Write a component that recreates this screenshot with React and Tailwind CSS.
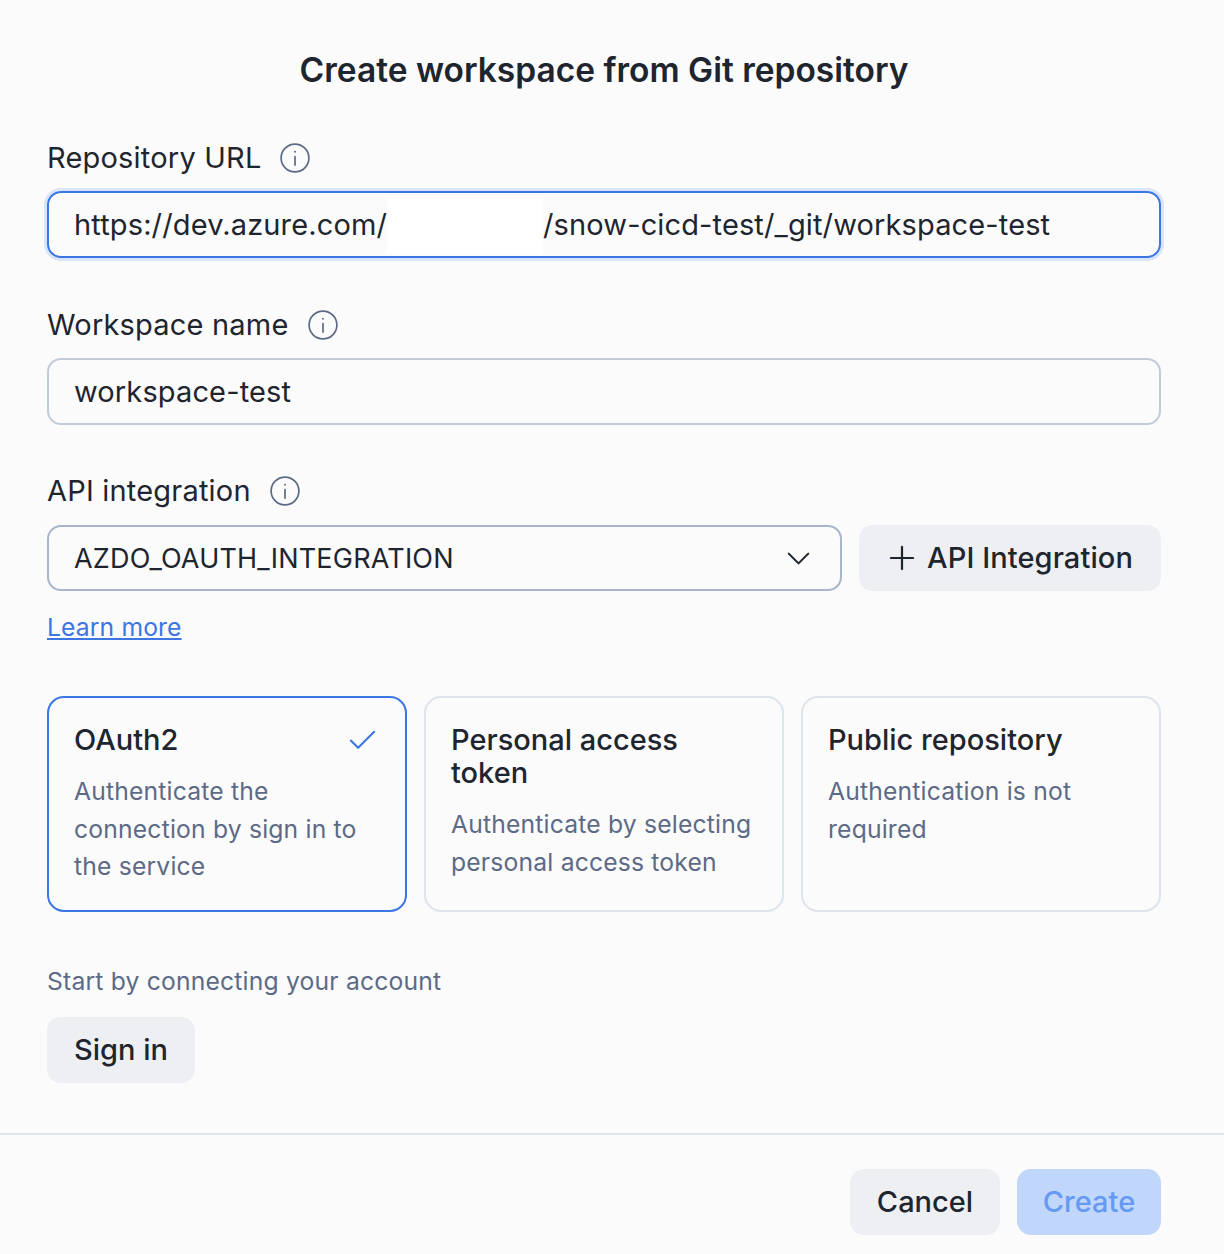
import { Check, ChevronDown, Plus } from "lucide-react";

const font = "font-['Inter',sans-serif]";

function InfoIcon() {
  return (
    <svg width="34" height="34" viewBox="0 0 24 24" fill="none" stroke="#5d6a85" strokeWidth="1.2" strokeLinecap="round">
      <circle cx="12" cy="12" r="9.8" />
      <path d="M12 11v6" />
      <circle cx="12" cy="7.6" r="0.7" fill="#5d6a85" stroke="none" />
    </svg>
  );
}

function Label({ children }) {
  return (
    <div className="flex h-[34px] items-center gap-[17px] text-[29px] leading-[34px] tracking-[0.2px] text-[#1e252f]">
      <span>{children}</span>
      <InfoIcon />
    </div>
  );
}

function AuthCard({ title, description, selected }) {
  return (
    <div className={`rounded-[17px] border-2 px-[25px] pt-[25px] ${selected ? "border-[#3b76e3]" : "border-[#dfe3ec]"}`}>
      <div className="relative">
        <h3 className="text-[29px] leading-[33px] font-medium text-[#1e252f]">{title}</h3>
        {selected ? <Check size={35} strokeWidth={1.45} className="absolute right-0 top-0 text-[#3b76e3]" /> : null}
      </div>
      <p className="mt-[17px] text-[24.7px] leading-[37.5px] tracking-[0.18px] text-[#5d6a85]">{description}</p>
    </div>
  );
}

export default function App() {
  return (
    <div className={`${font} h-[1254px] w-[1224px] overflow-hidden bg-[#fbfbfc]`}>
      <div className="pl-[47px] pr-[63px]">
        <h1 className="pt-[50px] text-center text-[33.5px] leading-[40px] font-semibold text-[#1e252f]">
          Create workspace from Git repository
        </h1>

        <div className="mt-[51px]">
          <Label>Repository URL</Label>
          <div className="mt-[16px] flex h-[67px] items-center rounded-[14px] border-2 border-[#3b76e3] pl-[25px] text-[29px] tracking-[0.13px] text-[#1e252f] shadow-[0_0_0_3px_#d8e5fb]">
            <span>https://dev.azure.com/</span>
            <span className="h-[58px] w-[156px] bg-white" />
            <span>/snow-cicd-test/_git/workspace-test</span>
          </div>
        </div>

        <div className="mt-[50px]">
          <Label>Workspace name</Label>
          <div className="mt-[16px] flex h-[67px] items-center rounded-[14px] border-2 border-[#c3cbdb] pl-[25px] text-[29px] tracking-[0.13px] text-[#1e252f]">
            workspace-test
          </div>
        </div>

        <div className="mt-[49px]">
          <Label>API integration</Label>
          <div className="mt-[17px] flex gap-[17px]">
            <div className="flex h-[66px] w-[795px] items-center justify-between rounded-[14px] border-2 border-[#a9b5cc] pl-[25px] pr-[22px] text-[27px] tracking-[0.2px] text-[#1e252f]">
              <span className="pt-[2px]">AZDO_OAUTH_INTEGRATION</span>
              <ChevronDown size={39} strokeWidth={1.3} />
            </div>
            <button className="flex h-[66px] flex-1 items-center justify-center gap-[6px] rounded-[14px] bg-[#eeeff3] pr-[4px] text-[29px] font-medium tracking-[0.1px] text-[#1e252f]">
              <Plus size={38} strokeWidth={1.4} />
              API Integration
            </button>
          </div>
        </div>

        <a className="mt-[18px] block text-[24.7px] leading-[36px] tracking-[0.12px] text-[#3b76e3] underline">Learn more</a>

        <div className="mt-[51px] grid h-[216px] grid-cols-3 gap-[17px]">
          <AuthCard selected title="OAuth2" description="Authenticate the connection by sign in to the service" />
          <AuthCard title="Personal access token" description="Authenticate by selecting personal access token" />
          <AuthCard title="Public repository" description="Authentication is not required" />
        </div>

        <p className="mt-[51px] text-[24.7px] leading-[36px] tracking-[0.18px] text-[#5d6a85]">Start by connecting your account</p>

        <button className="mt-[18px] block h-[66px] rounded-[14px] bg-[#eeeff3] px-[27px] text-[29px] font-medium text-[#1e252f]">
          Sign in
        </button>
      </div>

      <div className="mt-[50px] flex justify-end gap-[17px] border-t-2 border-[#dfe3ec] px-[63px] pt-[34px]">
        <button className="h-[66px] w-[150px] rounded-[14px] bg-[#eeeff3] text-[29px] font-medium text-[#1e252f]">Cancel</button>
        <button className="h-[66px] w-[144px] rounded-[14px] bg-[#c0d6fb] text-[29px] font-medium text-[#669af2]">Create</button>
      </div>
    </div>
  );
}
